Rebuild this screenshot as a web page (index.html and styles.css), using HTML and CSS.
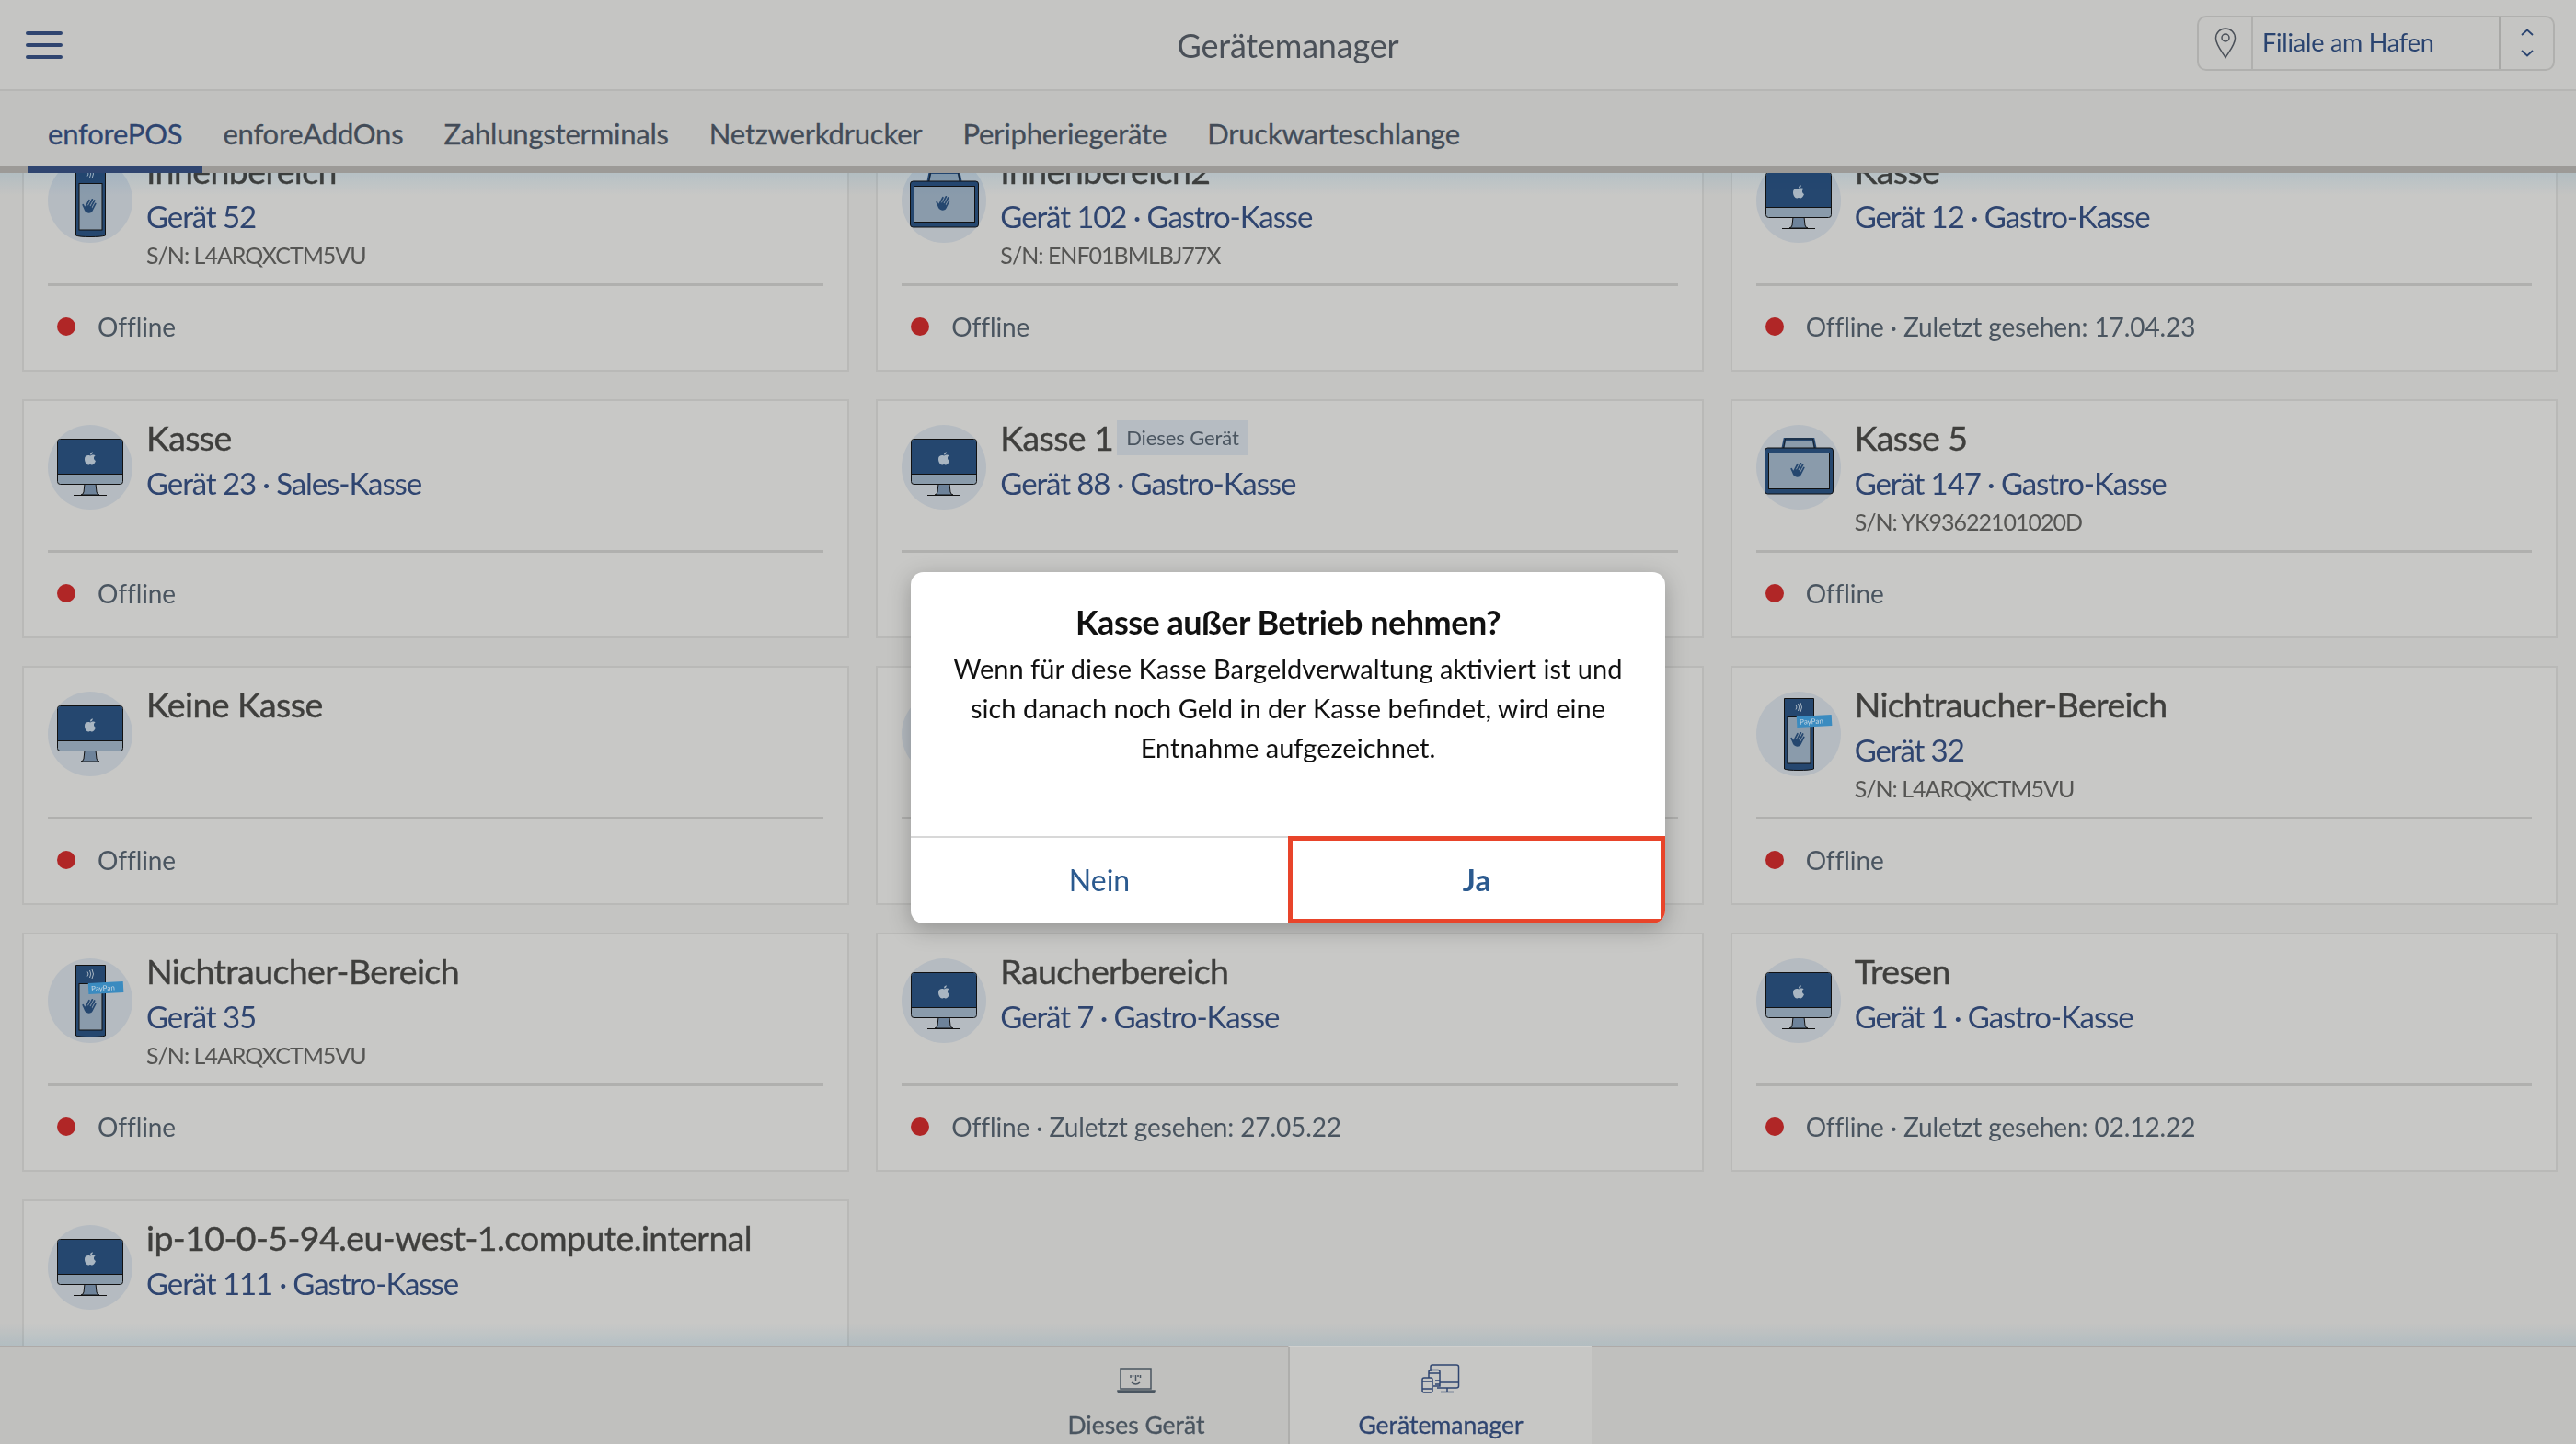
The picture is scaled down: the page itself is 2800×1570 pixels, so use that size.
FILE: index.html
```html
<!DOCTYPE html>
<html lang="de">
<head>
    <meta charset="UTF-8">
    <title>Gerätemanager</title>
    <link rel="stylesheet" href="styles.css">
</head>
<body>

    <!-- shared device icons -->
    <svg class="icon-defs" width="0" height="0">
        <defs>
            <g id="hand">
                <g transform="rotate(28)" fill="none" stroke="#25476f" stroke-linecap="round">
                    <ellipse cx="0" cy="4" rx="4.800" ry="4" fill="#25476f" stroke="none"/>
                    <path d="M-3.900 3V-5M-1.300 2V-7.500M1.300 2V-7.500M3.900 3V-5" stroke-width="1.700"/>
                    <path d="M-4 5L-7.500 2.500" stroke-width="1.800"/>
                </g>
            </g>
            <g id="imac">
                <circle cx="46" cy="46" r="46" fill="#b5bbc1"/>
                <path d="M40 64H52L53 73Q54 76 56 76H36Q38 76 39 73Z" fill="#6e839a" stroke="#111" stroke-width="1"/>
                <path d="M28 76.500H64" stroke="#111" stroke-width="1"/>
                <rect x="10.500" y="15.500" width="71" height="49" rx="3" fill="#8a9bab" stroke="#111" stroke-width="1"/>
                <path d="M13.500 16H78.500Q81 16 81 18.500V53H11V18.500Q11 16 13.500 16Z" fill="#25476f"/>
                <path d="M10.500 53.500H81.500" stroke="#111" stroke-width="1"/>
                <path d="M46 33.500C44 32.500 40 33 40 37C40 40.500 42 43.500 44 43.500C45 43.500 45.500 43 46 43C46.500 43 47 43.500 48.200 43.500C49.800 43.500 51.300 41 52 39C49.500 38 49.300 34.500 51.700 33.300C50 31.800 47.500 32.700 46 33.500ZM46 32.500C46 30.800 47.200 29.500 48.800 29.200C49 31 47.600 32.400 46 32.500Z" fill="#a9b6c2"/>
            </g>
            <g id="terminal">
                <circle cx="46" cy="46" r="46" fill="#b5bbc1"/>
                <path d="M30.500 7.500H62.500V84Q58 85.500 46 85.500Q34 85.500 30.500 84Z" fill="#25476f" stroke="#111" stroke-width="1"/>
                <rect x="34" y="27.500" width="25" height="50.500" fill="#8a9bab" stroke="#111" stroke-width="1"/>
                <path d="M43 14.500Q45 17 43 19.500M45.500 13Q48 17 45.500 21M48 12Q51 17 48 22" fill="none" stroke="#a9b6c2" stroke-width="1"/>
                <use href="#hand" x="46" y="52"/>
            </g>
            <g id="terminal-pay">
                <use href="#terminal"/>
                <g transform="rotate(-3 63 31)">
                    <rect x="44" y="26" width="38" height="12" fill="#3a8bc0"/>
                    <text x="47" y="35" class="pay-tag">PayPan</text>
                </g>
            </g>
            <g id="case">
                <circle cx="46" cy="46" r="46" fill="#b5bbc1"/>
                <path d="M29 25L31 15.500H62L64 25" fill="#8a9bab" stroke="#25476f" stroke-width="3"/>
                <path d="M29.500 26L31.500 15H61.500L63.500 26" fill="none" stroke="#111" stroke-width="0.700"/>
                <rect x="9.500" y="25" width="74" height="50" rx="3" fill="#25476f" stroke="#111" stroke-width="1"/>
                <rect x="13.500" y="30.500" width="66" height="39" fill="#8a9bab" stroke="#111" stroke-width="1"/>
                <use href="#hand" x="46" y="49"/>
            </g>
        </defs>
    </svg>

    <div class="app">
        <header class="topbar">
            <button class="menu-btn"><span></span><span></span><span></span></button>
            <div class="page-title">Gerätemanager</div>
            <div class="branch-select">
                <div class="branch-pin">
                    <svg width="24" height="34" viewBox="0 0 24 34" fill="none" stroke="#4a5058" stroke-width="1.500">
                        <path d="M12 32.500C8 26 1.500 18.500 1.500 11.500A10.500 10.500 0 0 1 22.500 11.500C22.500 18.500 16 26 12 32.500Z"/>
                        <circle cx="12" cy="11" r="4"/>
                    </svg>
                </div>
                <div class="branch-name">Filiale am Hafen</div>
                <div class="branch-arrows">
                    <svg width="16" height="32" viewBox="0 0 16 32" fill="none" stroke="#2a4470" stroke-width="1.800">
                        <path d="M2 7L8 1.500L14 7M2 24L8 29.500L14 24"/>
                    </svg>
                </div>
            </div>
        </header>

        <nav class="tabs">
            <a class="tab active">enforePOS</a>
            <a class="tab">enforeAddOns</a>
            <a class="tab">Zahlungsterminals</a>
            <a class="tab">Netzwerkdrucker</a>
            <a class="tab">Peripheriegeräte</a>
            <a class="tab">Druckwarteschlange</a>
        </nav>

        <main class="content">
            <div class="device-grid">

                <div class="card">
                    <div class="card-head">
                        <svg class="device-icon" viewBox="0 0 92 92"><use href="#terminal"/></svg>
                        <div class="card-text">
                            <div class="device-name">Innenbereich</div>
                            <div class="device-sub">Gerät 52</div>
                            <div class="device-sn">S/N: L4ARQXCTM5VU</div>
                        </div>
                    </div>
                    <div class="card-status"><span class="dot"></span>Offline</div>
                </div>

                <div class="card">
                    <div class="card-head">
                        <svg class="device-icon" viewBox="0 0 92 92"><use href="#case"/></svg>
                        <div class="card-text">
                            <div class="device-name">Innenbereich2</div>
                            <div class="device-sub">Gerät 102 · Gastro-Kasse</div>
                            <div class="device-sn">S/N: ENF01BMLBJ77X</div>
                        </div>
                    </div>
                    <div class="card-status"><span class="dot"></span>Offline</div>
                </div>

                <div class="card">
                    <div class="card-head">
                        <svg class="device-icon" viewBox="0 0 92 92"><use href="#imac"/></svg>
                        <div class="card-text">
                            <div class="device-name">Kasse</div>
                            <div class="device-sub">Gerät 12 · Gastro-Kasse</div>
                        </div>
                    </div>
                    <div class="card-status"><span class="dot"></span>Offline · Zuletzt gesehen: 17.04.23</div>
                </div>

                <div class="card">
                    <div class="card-head">
                        <svg class="device-icon" viewBox="0 0 92 92"><use href="#imac"/></svg>
                        <div class="card-text">
                            <div class="device-name">Kasse</div>
                            <div class="device-sub">Gerät 23 · Sales-Kasse</div>
                        </div>
                    </div>
                    <div class="card-status"><span class="dot"></span>Offline</div>
                </div>

                <div class="card">
                    <div class="card-head">
                        <svg class="device-icon" viewBox="0 0 92 92"><use href="#imac"/></svg>
                        <div class="card-text">
                            <div class="device-name">Kasse 1 <span class="badge">Dieses Gerät</span></div>
                            <div class="device-sub">Gerät 88 · Gastro-Kasse</div>
                        </div>
                    </div>
                    <div class="card-status"><span class="dot"></span>Offline</div>
                </div>

                <div class="card">
                    <div class="card-head">
                        <svg class="device-icon" viewBox="0 0 92 92"><use href="#case"/></svg>
                        <div class="card-text">
                            <div class="device-name">Kasse 5</div>
                            <div class="device-sub">Gerät 147 · Gastro-Kasse</div>
                            <div class="device-sn">S/N: YK93622101020D</div>
                        </div>
                    </div>
                    <div class="card-status"><span class="dot"></span>Offline</div>
                </div>

                <div class="card">
                    <div class="card-head">
                        <svg class="device-icon" viewBox="0 0 92 92"><use href="#imac"/></svg>
                        <div class="card-text">
                            <div class="device-name">Keine Kasse</div>
                        </div>
                    </div>
                    <div class="card-status"><span class="dot"></span>Offline</div>
                </div>

                <!-- this one sits behind the dialog -->
                <div class="card">
                    <div class="card-head">
                        <svg class="device-icon" viewBox="0 0 92 92"><use href="#imac"/></svg>
                    </div>
                    <div class="card-status"></div>
                </div>

                <div class="card">
                    <div class="card-head">
                        <svg class="device-icon" viewBox="0 0 92 92"><use href="#terminal-pay"/></svg>
                        <div class="card-text">
                            <div class="device-name">Nichtraucher-Bereich</div>
                            <div class="device-sub">Gerät 32</div>
                            <div class="device-sn">S/N: L4ARQXCTM5VU</div>
                        </div>
                    </div>
                    <div class="card-status"><span class="dot"></span>Offline</div>
                </div>

                <div class="card">
                    <div class="card-head">
                        <svg class="device-icon" viewBox="0 0 92 92"><use href="#terminal-pay"/></svg>
                        <div class="card-text">
                            <div class="device-name">Nichtraucher-Bereich</div>
                            <div class="device-sub">Gerät 35</div>
                            <div class="device-sn">S/N: L4ARQXCTM5VU</div>
                        </div>
                    </div>
                    <div class="card-status"><span class="dot"></span>Offline</div>
                </div>

                <div class="card">
                    <div class="card-head">
                        <svg class="device-icon" viewBox="0 0 92 92"><use href="#imac"/></svg>
                        <div class="card-text">
                            <div class="device-name">Raucherbereich</div>
                            <div class="device-sub">Gerät 7 · Gastro-Kasse</div>
                        </div>
                    </div>
                    <div class="card-status"><span class="dot"></span>Offline · Zuletzt gesehen: 27.05.22</div>
                </div>

                <div class="card">
                    <div class="card-head">
                        <svg class="device-icon" viewBox="0 0 92 92"><use href="#imac"/></svg>
                        <div class="card-text">
                            <div class="device-name">Tresen</div>
                            <div class="device-sub">Gerät 1 · Gastro-Kasse</div>
                        </div>
                    </div>
                    <div class="card-status"><span class="dot"></span>Offline · Zuletzt gesehen: 02.12.22</div>
                </div>

                <div class="card">
                    <div class="card-head">
                        <svg class="device-icon" viewBox="0 0 92 92"><use href="#imac"/></svg>
                        <div class="card-text">
                            <div class="device-name">ip-10-0-5-94.eu-west-1.compute.internal</div>
                            <div class="device-sub">Gerät 111 · Gastro-Kasse</div>
                        </div>
                    </div>
                    <div class="card-status"></div>
                </div>

            </div>
        </main>

        <footer class="bottom-nav">
            <a class="nav-item">
                <svg width="42" height="28" viewBox="0 0 42 28" fill="none" stroke="#4a5560" stroke-width="1.500">
                    <rect x="4" y="1" width="33" height="22"/>
                    <path d="M1 25H41V26.500Q41 27.300 40 27.300H2Q1 27.300 1 26.500Z" fill="#4a5560"/>
                    <path d="M15 8V11M17.500 8V10M23 8V10M25.500 8V11M20.500 8V14M16 16Q20.500 20 25 16"/>
                </svg>
                <span>Dieses Gerät</span>
            </a>
            <a class="nav-item active">
                <svg width="42" height="32" viewBox="0 0 42 32" fill="none" stroke="#2f4570" stroke-width="1.500">
                    <path d="M10 8V3Q10 1 12 1H38Q40.500 1 40.500 3V24Q40.500 26 38 26H17"/>
                    <path d="M20 20H40M28 26V30M21 30.500H35"/>
                    <path d="M8 15V8.500Q8 6.500 10 6.500H18Q20 6.500 20 8.500V24H13M8 10H20"/>
                    <rect x="1" y="15" width="11" height="16" rx="2"/>
                    <path d="M1 19H12M1 27H12M15 18H20M15 22H20"/>
                </svg>
                <span>Gerätemanager</span>
            </a>
        </footer>

        <div class="dialog-layer">
            <div class="dialog">
                <div class="dialog-body">
                    <div class="dialog-title">Kasse außer Betrieb nehmen?</div>
                    <div class="dialog-text">Wenn für diese Kasse Bargeldverwaltung aktiviert ist und sich danach noch Geld in der Kasse befindet, wird eine Entnahme aufgezeichnet.</div>
                </div>
                <div class="dialog-buttons">
                    <button class="dialog-btn">Nein</button>
                    <button class="dialog-btn marked">Ja</button>
                </div>
            </div>
        </div>
    </div>

</body>
</html>
```
FILE: styles.css
```css
* {
    box-sizing: border-box;
}

body {
    margin: 0;
    font-family: 'Lato', sans-serif;
    color: #3f3f3d;
    background-color: #c4c4c2;
}

.icon-defs {
    position: absolute;
}

.pay-tag {
    font-size: 8px;
    fill: #c6d6e2;
}

.app {
    position: relative;
    display: flex;
    flex-direction: column;
    width: 2800px;
    height: 1570px;
    overflow: hidden;
}

/* top bar */
.topbar {
    display: flex;
    align-items: center;
    justify-content: space-between;
    height: 99px;
    padding: 0 23px 0 28px;
    background-color: #c5c5c3;
    border-bottom: 2px solid #b6b6b4;
    position: relative;
    flex: none;
}

.menu-btn {
    display: flex;
    flex-direction: column;
    gap: 9px;
    width: 40px;
    padding: 0;
    border: none;
    background: none;
}

.menu-btn span {
    display: block;
    height: 4px;
    border-radius: 2px;
    background-color: #2f4570;
}

.page-title {
    position: absolute;
    left: 0;
    right: 0;
    text-align: center;
    font-size: 36px;
    letter-spacing: -0.2px;
    color: #4a5058;
}

.branch-select {
    display: flex;
    align-items: stretch;
    width: 389px;
    height: 60px;
    border: 2px solid #b0b0ae;
    border-radius: 10px;
    margin-bottom: 4px;
}

.branch-pin {
    display: flex;
    align-items: center;
    justify-content: center;
    width: 59px;
    border-right: 2px solid #b0b0ae;
}

.branch-name {
    flex: 1;
    padding-left: 10px;
    font-size: 27px;
    letter-spacing: -0.2px;
    line-height: 54px;
    color: #2a4470;
}

.branch-arrows {
    display: flex;
    align-items: center;
    justify-content: center;
    width: 59px;
    border-left: 2px solid #a8a8a6;
}

/* tabs */
.tabs {
    display: flex;
    height: 89px;
    padding-left: 30px;
    background-color: #c1c1bf;
    border-bottom: 8px solid #9c9a97;
    position: relative;
    z-index: 2;
    flex: none;
}

.tab {
    height: 89px;
    padding: 0 22px;
    font-size: 31px;
    letter-spacing: -0.2px;
    line-height: 92px;
    -webkit-text-stroke: 0.3px;
    color: #434c58;
    white-space: nowrap;
}

.tab.active {
    color: #2f4570;
    border-bottom: 8px solid #2f4570;
}

/* device cards */
.content {
    position: relative;
    flex: 1;
    overflow: hidden;
    background-color: #c4c4c2;
}

.content::before,
.content::after {
    content: "";
    position: absolute;
    left: 0;
    right: 0;
    height: 24px;
    z-index: 1;
    mix-blend-mode: multiply;
}

.content::before {
    top: 0;
    background: linear-gradient(to bottom, #e8f6fe, white);
}

.content::after {
    bottom: 0;
    background: linear-gradient(to top, #e8f6fe, white);
}

.device-grid {
    display: grid;
    grid-template-columns: repeat(3, minmax(0, 1fr));
    grid-auto-rows: 260px;
    gap: 30px 29px;
    margin-top: -44px; /* list is scrolled */
    padding: 0 20px 0 24px;
}

.card {
    display: flex;
    flex-direction: column;
    padding: 0 26px;
    background-color: #c8c8c6;
    border: 2px solid #b9b9b7;
}

.card-head {
    display: flex;
    gap: 15px;
    height: 162px;
    padding-top: 26px;
    flex: none;
}

.device-icon {
    width: 92px;
    height: 92px;
    flex: none;
}

.card-text {
    margin-top: -6px;
    min-width: 0;
}

.device-name {
    display: flex;
    align-items: center;
    gap: 4px;
    font-size: 37.500px;
    letter-spacing: -0.6px;
    line-height: 40px;
    -webkit-text-stroke: 0.4px;
    color: #3f3f3d;
    white-space: nowrap;
}

.badge {
    padding: 0 10px;
    font-size: 22px;
    letter-spacing: -0.1px;
    line-height: 38px;
    -webkit-text-stroke: 0;
    color: #4a5560;
    background-color: #b6bcc2;
}

.device-sub {
    margin-top: 4px;
    font-size: 33px;
    letter-spacing: -1.1px;
    line-height: 50px;
    color: #2f4570;
}

.device-sn {
    margin-top: 1px;
    font-size: 25px;
    letter-spacing: -1px;
    line-height: 32px;
    color: #555553;
}

.card-status {
    display: flex;
    align-items: center;
    gap: 24px;
    flex: 1;
    padding: 0 0 3px 10px;
    font-size: 28px;
    letter-spacing: -0.1px;
    color: #4a5560;
    border-top: 3px solid #b0b0ae;
}

.dot {
    width: 20px;
    height: 20px;
    border-radius: 50%;
    background-color: #b02626;
}

/* bottom navigation */
.bottom-nav {
    display: flex;
    justify-content: center;
    height: 107px;
    background-color: #c0c0be;
    border-top: 2px solid #aeaaa8;
    position: relative;
    z-index: 2;
    flex: none;
}

.nav-item {
    display: flex;
    flex-direction: column;
    align-items: center;
    justify-content: flex-end;
    width: 330px;
    padding-bottom: 5px;
    font-size: 26.500px;
    -webkit-text-stroke: 0.3px;
    color: #4a5560;
}

.nav-item span {
    margin-top: 18px;
}

.nav-item.active {
    margin-top: -2px;
    color: #2f4570;
    background-color: #c7c7c5;
    border-top: 2px solid #d0d0ce;
    border-left: 2px solid #aeaeac;
}

/* confirm dialog */
.dialog-layer {
    position: absolute;
    top: 0;
    left: 0;
    right: 0;
    bottom: 0;
    z-index: 5;
    display: flex;
    justify-content: center;
    align-items: flex-start;
    padding-top: 622px;
}

.dialog {
    display: flex;
    flex-direction: column;
    width: 820px;
    height: 382px;
    background-color: white;
    border-radius: 14px;
    box-shadow: 0 6px 24px rgba(0, 0, 0, 0.25);
    overflow: hidden;
}

.dialog-body {
    flex: 1;
    padding: 32px 30px 0;
    text-align: center;
    color: #111;
}

.dialog-title {
    font-size: 36px;
    letter-spacing: -0.5px;
    line-height: 44px;
    font-weight: 700;
}

.dialog-text {
    margin-top: 7px;
    font-size: 29px;
    line-height: 43px;
}

.dialog-buttons {
    display: flex;
    height: 95px;
    flex: none;
    border-top: 2px solid #d8d8d8;
}

.dialog-btn {
    flex: none;
    width: 50%;
    padding: 0 0 2px;
    border: none;
    background: none;
    font-family: inherit;
    font-size: 32px;
    color: #2b5a8f;
}

.dialog-btn.marked {
    margin-top: -2px;
    font-size: 33px;
    font-weight: 700;
    border: 5px solid #e8442a;
}
```
